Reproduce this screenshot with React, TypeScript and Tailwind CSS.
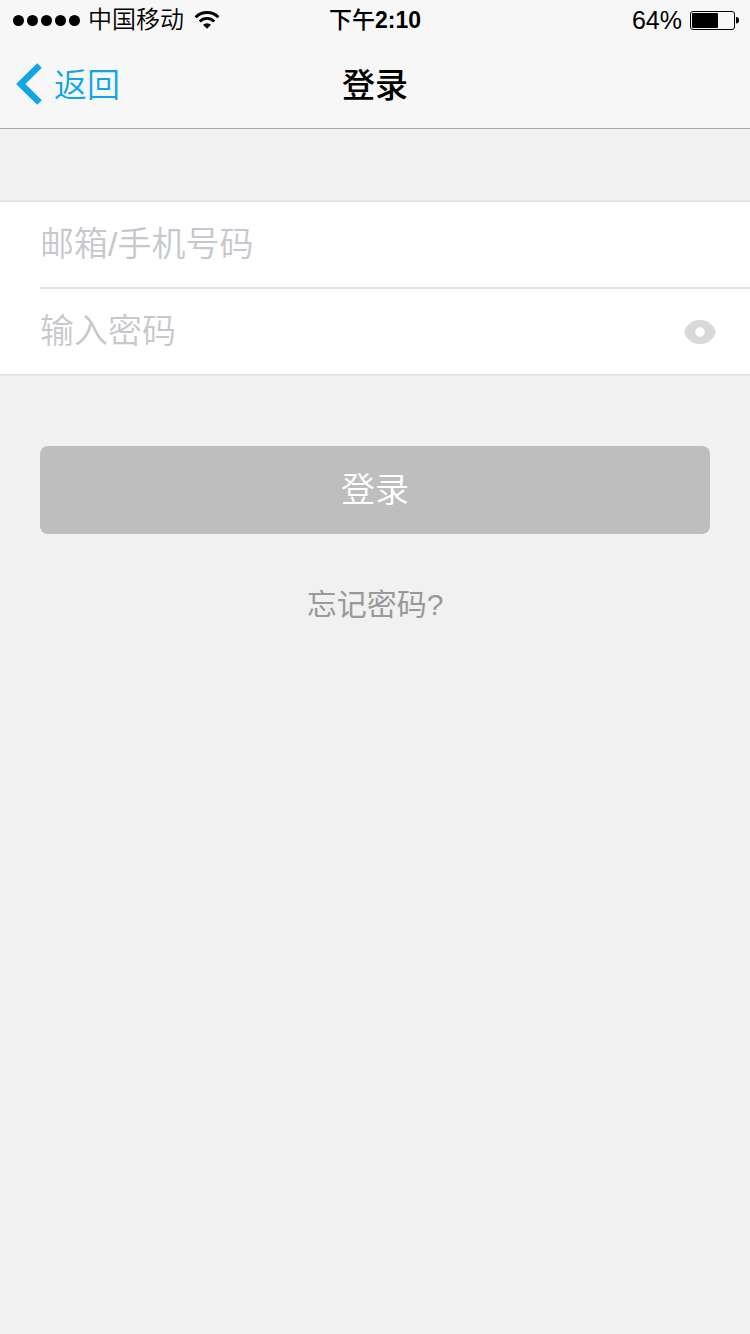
import { useState } from "react";

function SignalDots() {
  return (
    <div className="flex gap-[3px]">
      {[1, 2, 3, 4, 5].map((n) => (
        <span key={n} className="size-[11px] rounded-full bg-black" />
      ))}
    </div>
  );
}

function WifiIcon() {
  return (
    <svg width="26" height="18" viewBox="0 0 26 18" aria-hidden="true">
      <g fill="none" stroke="#000" strokeWidth="2.8">
        <path d="M1.6 6.2a16.2 16.2 0 0 1 22.8 0" />
        <path d="M5.8 10.4a10.2 10.2 0 0 1 14.4 0" />
      </g>
      <path d="M9 13.8a5.7 5.7 0 0 1 8 0L13 17.8z" />
    </svg>
  );
}

function BatteryIcon() {
  return (
    <svg width="50" height="20" viewBox="0 0 50 20" aria-hidden="true">
      <rect x="0.5" y="1.5" width="44" height="18" rx="2.5" fill="none" stroke="#000" strokeWidth="1" />
      <rect x="2" y="3" width="26" height="15" rx="1" />
      <path d="M46 7a3 3.300 0 0 1 0 6.600z" />
    </svg>
  );
}

function StatusBar() {
  return (
    <div className="grid h-10 grid-cols-[1fr_auto_1fr] items-center pl-[13px] text-[23px] leading-10">
      <div className="flex items-center">
        <SignalDots />
        <span className="ml-2 mr-[10px] text-[24px] font-[350]">中国移动</span>
        <WifiIcon />
      </div>
      <span className="pr-[13px] font-medium">
        下午<b>2:10</b>
      </span>
      <div className="flex items-center justify-end pr-[10px]">
        <span className="mr-2 text-[25px]">64%</span>
        <BatteryIcon />
      </div>
    </div>
  );
}

function NavBar() {
  return (
    <nav className="grid h-[88px] grid-cols-[1fr_auto_1fr] items-center px-4">
      <button type="button" className="flex items-center gap-3 justify-self-start text-[33px] font-[350] text-[#0fa5e6]">
        <svg width="26" height="42" viewBox="0 0 26 42" aria-hidden="true">
          <path d="M23.500 2.500 4.800 21l18.700 18.500" fill="none" stroke="currentColor" strokeWidth="6.600" />
        </svg>
        <span className="pt-1">返回</span>
      </button>
      <h1 className="pt-1 text-[33px] font-medium">登录</h1>
    </nav>
  );
}

export default function App() {
  const [account, setAccount] = useState("");
  const [password, setPassword] = useState("");
  const [visible, setVisible] = useState(false);

  const inputClass =
    "h-[85px] w-full min-w-0 bg-transparent text-[34px] font-[350] outline-none placeholder:text-[#c7c7cd]";

  return (
    <div className="min-h-screen bg-[#f1f1f1] font-['Liberation_Sans','Noto_Sans_CJK_SC',sans-serif] text-black">
      <header className="border-b border-[#a9a9ab] bg-[#f7f7f7]">
        <StatusBar />
        <NavBar />
      </header>

      <form className="pt-[71px]" onSubmit={(e) => e.preventDefault()}>
        <div className="border-y-2 border-[#e2e2e2] bg-white pl-10">
          <div className="border-b-2 border-[#e2e2e2]">
            <input
              type="text"
              aria-label="邮箱/手机号码"
              placeholder="邮箱/手机号码"
              value={account}
              onChange={(e) => setAccount(e.target.value)}
              className={inputClass}
            />
          </div>
          <div className="flex items-center pr-[34px]">
            <input
              type={visible ? "text" : "password"}
              aria-label="输入密码"
              placeholder="输入密码"
              value={password}
              onChange={(e) => setPassword(e.target.value)}
              className={inputClass}
            />
            <button type="button" aria-label="显示密码" onClick={() => setVisible(!visible)} className="shrink-0">
              <svg width="32" height="24" viewBox="0 0 32 24" aria-hidden="true">
                <path
                  d="M16 0C24 0 29 5 31.400 10.300Q32 12 31.400 13.700C29 19 24 24 16 24S3 19 .6 13.700Q0 12 .6 10.300C3 5 8 0 16 0zm0 7.200a4.800 4.800 0 1 0 0 9.600 4.800 4.800 0 0 0 0-9.600z"
                  fill="#d8d8d8"
                  fillRule="evenodd"
                />
              </svg>
            </button>
          </div>
        </div>

        <div className="flex flex-col px-10 pt-[70px]">
          <button type="submit" className="h-[88px] rounded-lg bg-[#bebebe] text-[34px] font-[350] text-white">
            登录
          </button>
          <a href="#forgot" className="mt-12 self-center text-[30px] leading-[46px] text-[#999]">
            忘记密码?
          </a>
        </div>
      </form>
    </div>
  );
}
